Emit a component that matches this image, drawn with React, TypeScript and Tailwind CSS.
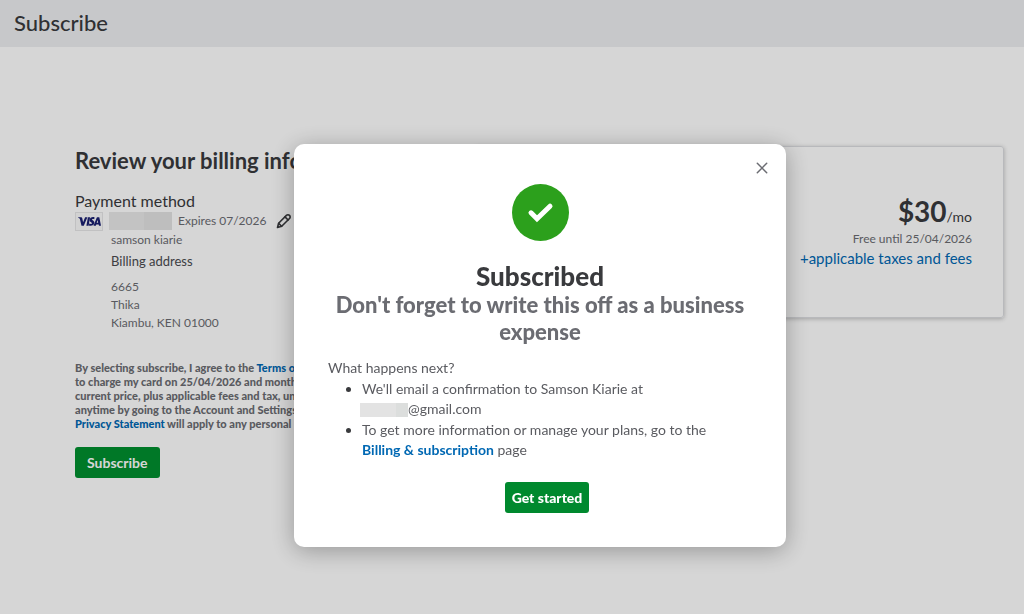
import type { ReactNode } from "react";

function Header() {
  return (
    <header className="flex h-[47px] items-center bg-[#eeeff1] px-3.5 pb-0.5">
      <h1 className="text-[22px] leading-7 font-medium text-[#393a3d]">Subscribe</h1>
    </header>
  );
}

function VisaBadge() {
  return (
    <svg viewBox="0 0 28 19" className="h-[19px] w-7 shrink-0" role="img" aria-label="Visa">
      <rect x="0.5" y="0.5" width="27" height="18" fill="#fbfbfb" stroke="#e6e6e8" />
      <g fill="#1a1f71">
        <path d="M3 5.2h3.2c.6 0 .9.3 1 .8l.9 4.2 2-5h2.300l-3.600 8.500H6.500L4.900 7.100C4.700 6.500 4.200 6 3 5.500z" />
        <path d="M12.900 5.200h2.200l-1.500 8.500h-2.200z" />
        <path d="M19.600 5.400l-.4 1.800c-1-.5-2.300-.4-2.300.2 0 .8 2.600 1 2.500 3.300-.1 2.700-3.400 3.600-5.500 2.700l.4-1.900c1.200.6 2.700.5 2.700-.2 0-.9-2.500-1-2.400-3.200.1-2.700 3-3.500 5-2.700z" />
        <path d="M22.300 5.200h2l1.700 8.500h-2l-.3-1.300h-2.400l-.5 1.300h-2.300l3.100-7.700c.1-.5.400-.8.700-.8zm.2 2.900l-.8 2.600h1.500z" />
      </g>
    </svg>
  );
}

function PencilIcon() {
  return (
    <svg
      viewBox="0 0 16 16"
      className="size-4"
      fill="none"
      stroke="#393a3d"
      strokeWidth="1.600"
      strokeLinejoin="round"
      strokeLinecap="round"
      aria-hidden="true"
    >
      <path d="M1.500 14.500l1.100-4.300 7.800-7.800c.9-.9 2.200-.9 3.100 0s.9 2.200 0 3.100l-7.800 7.800z" />
      <path d="M9 3.900l3.100 3.100M2.700 10.400l2.900 2.900" />
    </svg>
  );
}

function TextLink({ children, className = "" }: { children: ReactNode; className?: string }) {
  return (
    <a href="#" className={`text-[#0068b3] ${className}`}>
      {children}
    </a>
  );
}

function BillingInfo() {
  return (
    <section className="w-[300px] shrink-0 whitespace-nowrap">
      <h2 className="text-[22px] leading-7 font-bold text-[#393a3d]">Review your billing info</h2>
      <h3 className="mt-4 text-base leading-5 text-[#393a3d]">Payment method</h3>
      <div className="flex h-5 items-center">
        <VisaBadge />
        <span className="ml-1.5 flex h-[18px] w-[63px] bg-[#e9e9e9]">
          <span className="ml-auto w-7 bg-[#e3e3e3]" />
        </span>
        <span className="ml-1.5 text-[12px] text-[#6b6c72]">Expires 07/2026</span>
        <button type="button" aria-label="Edit payment method" className="ml-2.5">
          <PencilIcon />
        </button>
      </div>
      <div className="pl-9 text-[12px] leading-[18px] text-[#6b6c72]">
        <p>samson kiarie</p>
        <h4 className="mt-[3px] mb-2 text-[13px] text-[#4a4b50]">Billing address</h4>
        <address className="not-italic">
          6665
          <br />
          Thika
          <br />
          Kiambu, KEN 01000
        </address>
      </div>
      <p className="mt-[29px] text-[11px] leading-[14px] font-black text-[#6b6c72]">
        By selecting subscribe, I agree to the <TextLink>Terms of</TextLink>
        <br />
        to charge my card on 25/04/2026 and month
        <br />
        current price, plus applicable fees and tax, un
        <br />
        anytime by going to the Account and Settings
        <br />
        <TextLink>Privacy Statement</TextLink> will apply to any personal
      </p>
      <button
        type="button"
        className="mt-4 h-[31px] rounded-[3px] bg-[#008f2f] px-3 text-sm font-bold text-white"
      >
        Subscribe
      </button>
    </section>
  );
}

function PriceCard() {
  return (
    <section className="flex h-[172px] min-w-0 flex-1 flex-col items-end justify-center rounded-[3px] border border-[#dcdde1] px-[31px] pb-1 text-right shadow-[0_1px_4px_rgba(0,0,0,0.25)]">
      <p className="flex items-baseline text-[#393a3d]">
        <span className="text-[28px] leading-9 font-bold">$30</span>
        <span className="text-sm leading-none">/mo</span>
      </p>
      <p className="text-[12px] leading-5 text-[#6b6c72]">Free until 25/04/2026</p>
      <TextLink className="text-[15px] leading-[18px]">+applicable taxes and fees</TextLink>
    </section>
  );
}

function SubscribedDialog() {
  return (
    <div className="fixed inset-0 flex items-start justify-center bg-black/16 pt-36 pl-14">
      <div
        role="dialog"
        aria-modal="true"
        aria-labelledby="dialog-title"
        className="relative w-[492px] rounded-[10px] bg-white px-[34px] pt-10 pb-[34px] shadow-[0_4px_24px_rgba(0,0,0,0.3)]"
      >
        <button type="button" aria-label="Close" className="absolute top-4 right-4 p-0.5">
          <svg viewBox="0 0 12 12" className="size-3" stroke="#6b6c72" strokeWidth="1.500" strokeLinecap="round" aria-hidden="true">
            <path d="M1.300 1.300l9.400 9.400M10.700 1.300l-9.400 9.400" />
          </svg>
        </button>
        <svg viewBox="0 0 57 57" className="mx-auto size-[57px]" aria-hidden="true">
          <circle cx="28.500" cy="28.500" r="28.500" fill="#2ca01c" />
          <path d="M19 28.800l6 6L38 22.200" fill="none" stroke="#fff" strokeWidth="5" strokeLinecap="round" strokeLinejoin="miter" />
        </svg>
        <h2 id="dialog-title" className="mt-5 text-center text-[26px] leading-[30px] font-black text-[#393a3d]">
          Subscribed
        </h2>
        <p className="text-center text-[22px] leading-[27px] font-black text-[#6b6c72]">
          Don't forget to write this off as a business expense
        </p>
        <div className="mt-[13px] text-sm leading-5 text-[#5a5b60]">
          <p>What happens next?</p>
          <ul className="mt-px list-disc space-y-px pr-6 pl-[34px] marker:text-[#393a3d]">
            <li>
              We'll email a confirmation to Samson Kiarie at
              <br />
              <span className="-ml-0.5 inline-flex h-3.5 w-12 bg-[#e3e3e3] align-middle">
                <span className="ml-auto w-3 bg-[#dcdedd]" />
              </span>
              @gmail.com
            </li>
            <li>
              To get more information or manage your plans, go to the
              <br />
              <TextLink className="font-bold">Billing &amp; subscription</TextLink> page
            </li>
          </ul>
        </div>
        <div className="mt-[22px] flex justify-center pl-3.5">
          <button type="button" className="h-[31px] rounded-[3px] bg-[#00892e] px-[7px] text-sm font-black text-white">
            Get started
          </button>
        </div>
      </div>
    </div>
  );
}

export default function App() {
  return (
    <div className="min-h-screen bg-white font-['Lato','Liberation_Sans',sans-serif]">
      <Header />
      <main className="flex items-start gap-[100px] pt-[99px] pr-5 pl-[75px]">
        <div className="pt-px">
          <BillingInfo />
        </div>
        <PriceCard />
      </main>
      <SubscribedDialog />
    </div>
  );
}
